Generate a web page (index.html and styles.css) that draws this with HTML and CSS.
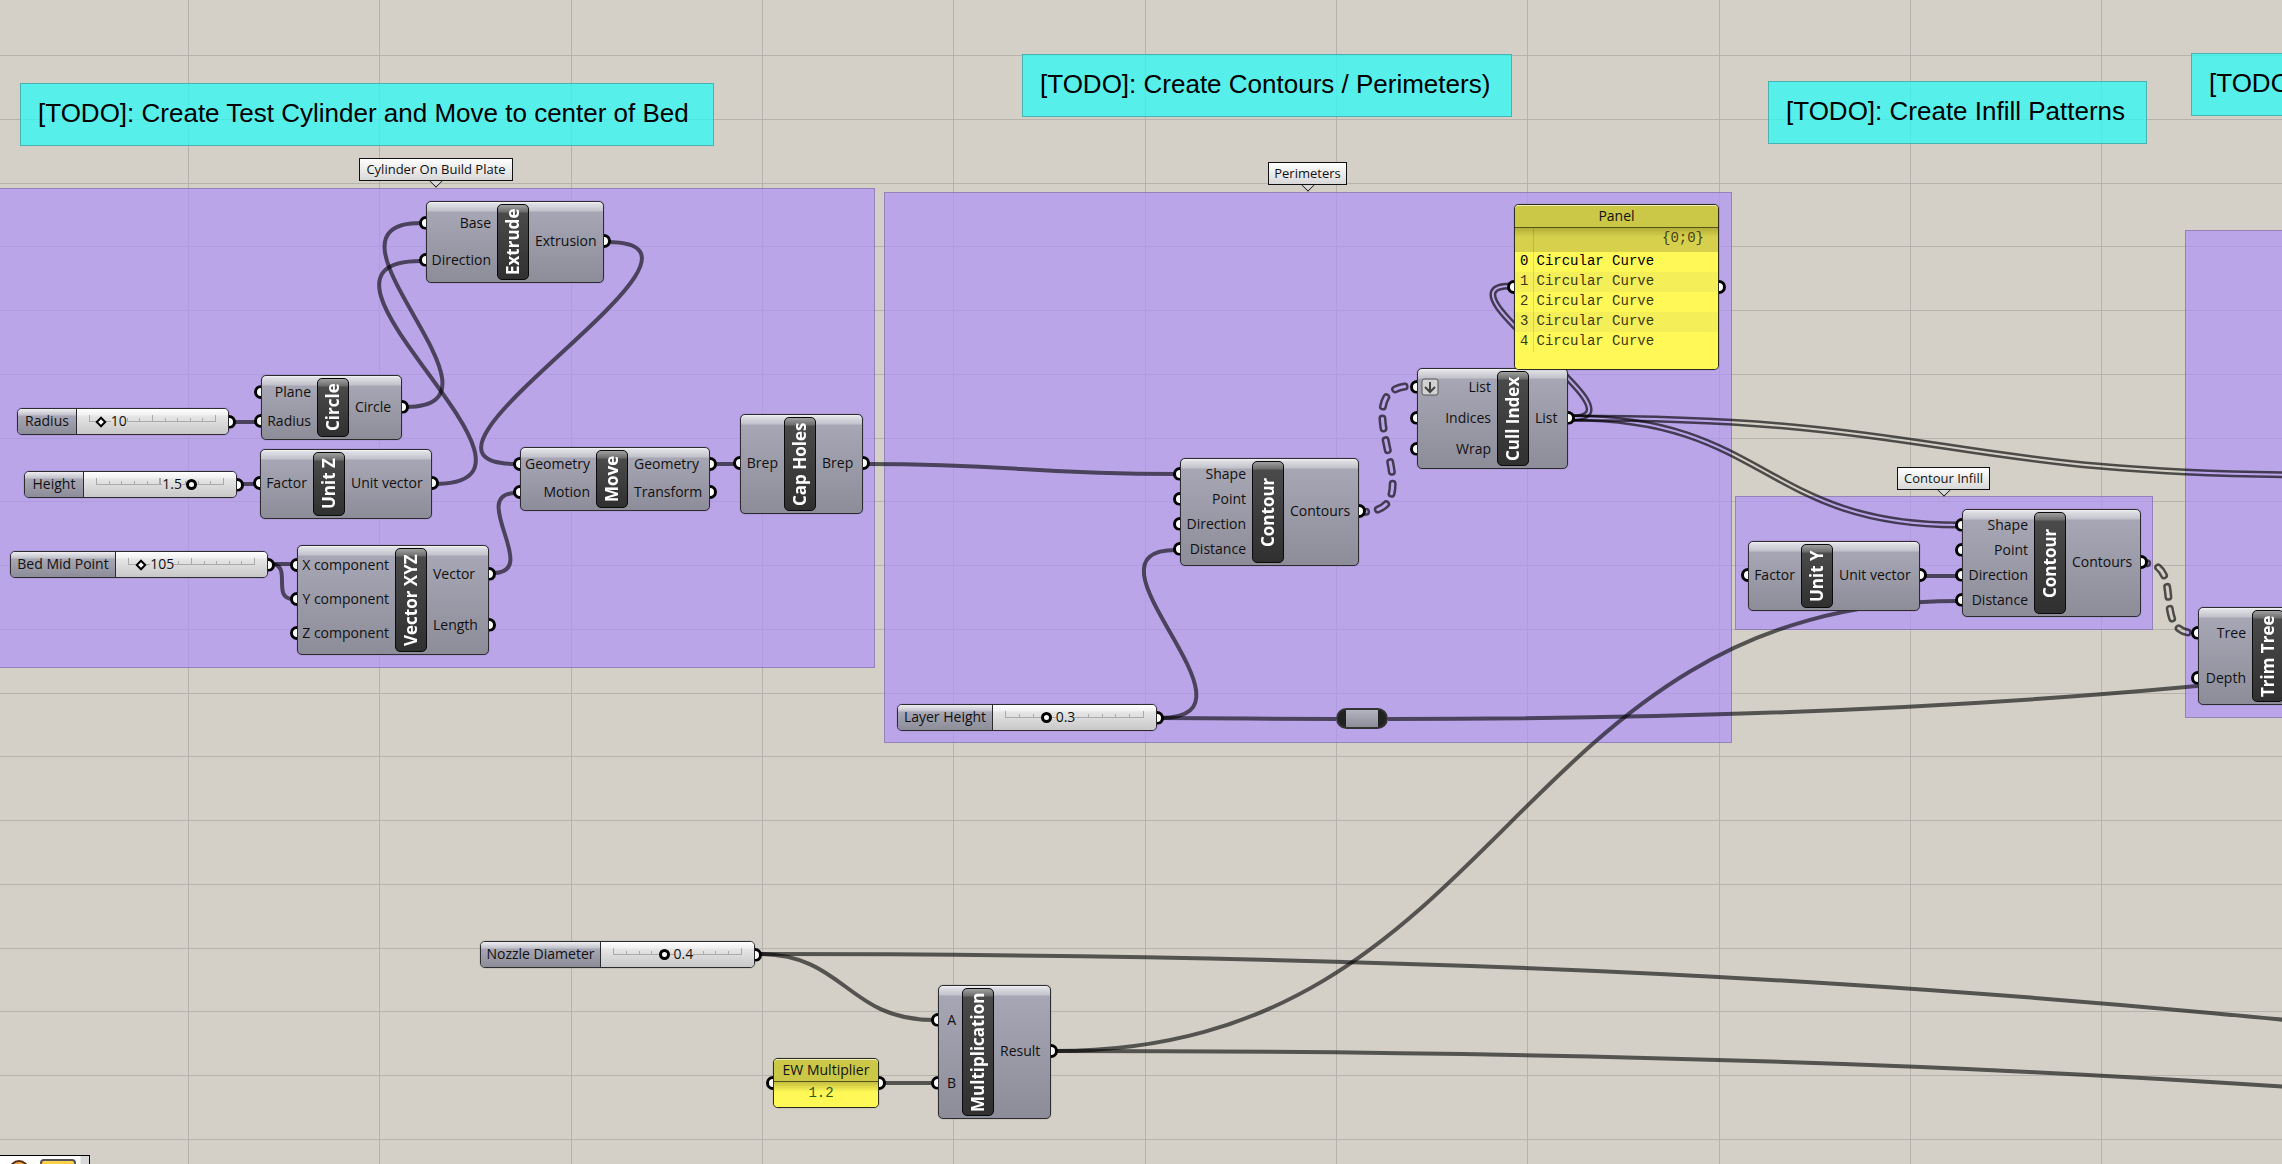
FILE: index.html
```html
<!DOCTYPE html>
<html lang="en">
<head>
<meta charset="utf-8">
<title>Slicer definition</title>
<link rel="stylesheet" href="styles.css">
</head>
<body>
<main class="canvas">
  <svg class="grid" aria-hidden="true">
    <defs>
      <pattern id="grid-lines" x="188" y="55" width="574" height="255" patternUnits="userSpaceOnUse">
        <path class="grid-line" d="M0 0h574v1h-574zM0 64h574v1h-574zM0 128h574v1h-574zM0 191h574v1h-574zM0 0h1v255h-1zM191 0h1v255h-1zM383 0h1v255h-1z"/>
      </pattern>
    </defs>
    <rect width="100%" height="100%" fill="url(#grid-lines)"/>
  </svg>

  <section class="group group-cylinder" aria-label="Cylinder On Build Plate"></section>
  <section class="group group-perimeters" aria-label="Perimeters"></section>
  <section class="group group-infill" aria-label="Contour Infill"></section>
  <section class="group group-trim" aria-label="Trim"></section>

  <h2 class="note note-cylinder">[TODO]: Create Test Cylinder and Move to center of Bed</h2>
  <h2 class="note note-contours">[TODO]: Create Contours / Perimeters)</h2>
  <h2 class="note note-infill">[TODO]: Create Infill Patterns</h2>
  <h2 class="note note-next">[TODO]:</h2>

  <div class="tag tag-cylinder">Cylinder On Build Plate</div>
  <div class="tag tag-perimeters">Perimeters</div>
  <div class="tag tag-infill">Contour Infill</div>

  <svg class="wires" aria-hidden="true">
    <defs>
      <path id="cull-far" d="M1572 418C1946 418 1946 475 2320 475"/>
      <path id="cull-contour" d="M1572 418C1765 418 1765 525 1958 525"/>
      <path id="cull-panel" d="M1572 418C1650 418 1432 286 1510 286"/>
      <path id="contour-cull" d="M1362 512C1440 512 1335 386 1413 386"/>
      <path id="contour-trim" d="M2143 563C2187 563 2150 633 2194 633"/>
      <mask id="m-far" class="list" maskUnits="userSpaceOnUse" x="0" y="0" width="100%" height="100%"><use class="outer" href="#cull-far"/><use class="inner" href="#cull-far"/></mask>
      <mask id="m-contour" class="list" maskUnits="userSpaceOnUse" x="0" y="0" width="100%" height="100%"><use class="outer" href="#cull-contour"/><use class="inner" href="#cull-contour"/></mask>
      <mask id="m-panel" class="list" maskUnits="userSpaceOnUse" x="0" y="0" width="100%" height="100%"><use class="outer" href="#cull-panel"/><use class="inner" href="#cull-panel"/></mask>
      <mask id="m-tree" class="tree" maskUnits="userSpaceOnUse" x="0" y="0" width="100%" height="100%"><use class="outer" href="#contour-cull"/><use class="inner" href="#contour-cull"/><use class="outer" href="#contour-trim"/><use class="inner" href="#contour-trim"/></mask>
    </defs>
    <path class="wire" d="M406 407C526 407 301 223 421 223"/>
    <path class="wire" d="M434 484C584 484 271 261 421 261"/>
    <path class="wire" d="M607 242C757 242 366 464 516 464"/>
    <path class="wire" d="M493 573C542 573 467 493 516 493"/>
    <path class="wire" d="M232 422H257"/>
    <path class="wire" d="M240 484H256"/>
    <path class="wire" d="M271 564H293"/>
    <path class="wire" d="M271 564C293 564 271 599 293 599"/>
    <path class="wire" d="M713 464H736"/>
    <path class="wire" d="M866 464C1021 464 1021 474 1176 474"/>
    <path class="wire" d="M1160 718C1276 718 1068 550 1176 550"/>
    <path class="wire" d="M1160 718C1248 718 1248 719 1336 719"/>
    <path class="wire" d="M1388 719C2588 719 2588 561 3788 561"/>
    <path class="wire" d="M758 954C846 954 846 1020 934 1020"/>
    <path class="wire" d="M758 954C2558 954 2558 1141 4358 1141"/>
    <path class="wire" d="M1055 1051C1507 1051 1507 601 1958 601"/>
    <path class="wire" d="M1055 1051C2705 1051 2705 1187 4355 1187"/>
    <path class="wire" d="M883 1083H934"/>
    <path class="wire" d="M1923 576H1958"/>
    <rect class="ink" width="100%" height="100%" mask="url(#m-far)"/>
    <rect class="ink" width="100%" height="100%" mask="url(#m-contour)"/>
    <rect class="ink" width="100%" height="100%" mask="url(#m-panel)"/>
    <rect class="ink" width="100%" height="100%" mask="url(#m-tree)"/>
  </svg>

  <article class="node extrude">
    <ul class="inputs"><li>Base</li><li>Direction</li></ul>
    <h3 class="core">Extrude</h3>
    <ul class="outputs"><li>Extrusion</li></ul>
  </article>
  <article class="node circle">
    <ul class="inputs"><li>Plane</li><li>Radius</li></ul>
    <h3 class="core">Circle</h3>
    <ul class="outputs"><li>Circle</li></ul>
  </article>
  <article class="node unit-z">
    <ul class="inputs"><li>Factor</li></ul>
    <h3 class="core">Unit Z</h3>
    <ul class="outputs"><li>Unit vector</li></ul>
  </article>
  <article class="node vector">
    <ul class="inputs"><li>X component</li><li>Y component</li><li>Z component</li></ul>
    <h3 class="core">Vector XYZ</h3>
    <ul class="outputs"><li>Vector</li><li>Length</li></ul>
  </article>
  <article class="node move">
    <ul class="inputs"><li>Geometry</li><li>Motion</li></ul>
    <h3 class="core">Move</h3>
    <ul class="outputs"><li>Geometry</li><li>Transform</li></ul>
  </article>
  <article class="node cap">
    <ul class="inputs"><li>Brep</li></ul>
    <h3 class="core">Cap Holes</h3>
    <ul class="outputs"><li>Brep</li></ul>
  </article>
  <article class="node contour">
    <ul class="inputs"><li>Shape</li><li>Point</li><li>Direction</li><li>Distance</li></ul>
    <h3 class="core">Contour</h3>
    <ul class="outputs"><li>Contours</li></ul>
  </article>
  <article class="node cull">
    <ul class="inputs">
      <li><svg class="flatten" viewBox="0 0 18 18" role="img" aria-label="Flatten"><rect x="1" y="1" width="16" height="16" rx="2"/><path d="M9 4V14M4 9L9 14L14 9"/></svg>List</li>
      <li>Indices</li><li>Wrap</li>
    </ul>
    <h3 class="core">Cull Index</h3>
    <ul class="outputs"><li>List</li></ul>
  </article>
  <article class="node unit-y">
    <ul class="inputs"><li>Factor</li></ul>
    <h3 class="core">Unit Y</h3>
    <ul class="outputs"><li>Unit vector</li></ul>
  </article>
  <article class="node contour contour-infill">
    <ul class="inputs"><li>Shape</li><li>Point</li><li>Direction</li><li>Distance</li></ul>
    <h3 class="core">Contour</h3>
    <ul class="outputs"><li>Contours</li></ul>
  </article>
  <article class="node trim">
    <ul class="inputs"><li>Tree</li><li>Depth</li></ul>
    <h3 class="core">Trim Tree</h3>
    <ul class="outputs"></ul>
  </article>
  <article class="node multiplication">
    <ul class="inputs"><li>A</li><li>B</li></ul>
    <h3 class="core">Multiplication</h3>
    <ul class="outputs"><li>Result</li></ul>
  </article>

  <div class="slider slider-radius">
    <label for="radius">Radius</label>
    <div class="track whole" style="--value:.1"><span class="scale"></span><output for="radius">10</output><input id="radius" type="range" min="0" max="100" value="10"></div>
  </div>
  <div class="slider slider-height">
    <label for="height">Height</label>
    <div class="track flip" style="--value:.75"><span class="scale"></span><output for="height">1.5</output><input id="height" type="range" min="0" max="2" step="0.1" value="1.5"></div>
  </div>
  <div class="slider slider-bed">
    <label for="bed">Bed Mid Point</label>
    <div class="track whole" style="--value:.105"><span class="scale"></span><output for="bed">105</output><input id="bed" type="range" min="0" max="1000" value="105"></div>
  </div>
  <div class="slider slider-layer">
    <label for="layer">Layer Height</label>
    <div class="track" style="--value:.3"><span class="scale"></span><output for="layer">0.3</output><input id="layer" type="range" min="0" max="1" step="0.1" value="0.3"></div>
  </div>
  <div class="slider slider-nozzle">
    <label for="nozzle">Nozzle Diameter</label>
    <div class="track" style="--value:.4"><span class="scale"></span><output for="nozzle">0.4</output><input id="nozzle" type="range" min="0" max="1" step="0.1" value="0.4"></div>
  </div>

  <div class="relay"></div>

  <section class="panel panel-curves">
    <h3>Panel</h3>
    <div class="panel-body">
      <table>
        <thead><tr><td></td><th scope="col">{0;0}</th></tr></thead>
        <tbody>
          <tr><th scope="row">0</th><td>Circular Curve</td></tr>
          <tr><th scope="row">1</th><td>Circular Curve</td></tr>
          <tr><th scope="row">2</th><td>Circular Curve</td></tr>
          <tr><th scope="row">3</th><td>Circular Curve</td></tr>
          <tr><th scope="row">4</th><td>Circular Curve</td></tr>
        </tbody>
      </table>
    </div>
  </section>
  <section class="panel panel-multiplier">
    <h3>EW Multiplier</h3>
    <div class="panel-body"><p>1.2</p></div>
  </section>

  <div class="toolbar" role="toolbar" aria-label="Canvas tools">
    <button type="button" aria-label="Preview"><svg viewBox="0 0 26 26"><circle cx="13" cy="11" r="9" fill="#f2a93b" stroke="#5a2f1a" stroke-width="2"/></svg></button>
    <button type="button" class="swatch" aria-label="Sketch"></button>
  </div>
</main>
</body>
</html>
```
FILE: styles.css
```css
*, ::before, ::after { box-sizing: border-box; }

body {
  margin: 0;
  font: 14px/18px "Open Sans", "Noto Sans", sans-serif;
  color: #111;
}

h2, h3, ul, p { margin: 0; padding: 0; }
ul { list-style: none; }

.canvas {
  position: relative;
  min-height: 100vh;
  overflow: hidden;
  background: #d4d0c8;
}

.grid, .wires {
  position: absolute;
  inset: 0;
  width: 100%;
  height: 100%;
}
.grid-line { fill: #000; fill-opacity: .14; }

/* groups */
.group {
  position: absolute;
  background: rgba(176, 147, 246, .7);
  border: 1px solid rgba(60, 50, 80, .3);
}
.group-cylinder { left: -10px; top: 188px; width: 885px; height: 480px; }
.group-perimeters { left: 884px; top: 192px; width: 848px; height: 551px; }
.group-infill { left: 1735px; top: 496px; width: 418px; height: 134px; }
.group-trim { left: 2185px; top: 230px; width: 400px; height: 488px; }

/* scribble notes */
.note {
  position: absolute;
  height: 63px;
  padding: 0 17px;
  background: rgba(47, 248, 244, .76);
  border: 1px solid rgba(60, 120, 120, .5);
  font: 26px/58px "Liberation Sans", Arial, sans-serif;
  color: #000;
  white-space: nowrap;
}
.note-cylinder { left: 20px; top: 83px; width: 694px; }
.note-contours { left: 1022px; top: 54px; width: 490px; }
.note-infill { left: 1768px; top: 81px; width: 379px; }
.note-next { left: 2191px; top: 53px; width: 400px; }

/* group name tags */
.tag {
  position: absolute;
  height: 23px;
  border: 1px solid #111;
  background: linear-gradient(#fff, #d8d8d8);
  font-size: 13px;
  line-height: 21px;
  text-align: center;
  white-space: nowrap;
}
.tag::after {
  content: "";
  position: absolute;
  left: 50%;
  bottom: -6px;
  width: 10px;
  height: 10px;
  margin-left: -5px;
  border: solid #111;
  border-width: 0 1px 1px 0;
  background: #d8d8d8;
  transform: rotate(45deg);
  clip-path: polygon(100% 0, 100% 100%, 0 100%);
}
.tag-cylinder { left: 359px; top: 158px; width: 154px; }
.tag-perimeters { left: 1268px; top: 162px; width: 79px; }
.tag-infill { left: 1897px; top: 467px; width: 93px; }

/* wires */
.wire { fill: none; stroke: #000; stroke-opacity: .6; stroke-width: 4; }
.ink { fill: #000; fill-opacity: .64; }
mask use { fill: none; }
.list .outer { stroke: #fff; stroke-width: 7; }
.list .inner { stroke: #000; stroke-width: 2; }
.tree use { stroke-linecap: round; stroke-dasharray: 10 12; stroke-dashoffset: 6; }
.tree .outer { stroke: #fff; stroke-width: 8; }
.tree .inner { stroke: #000; stroke-width: 3; }

/* components */
.node {
  position: absolute;
  display: flex;
  padding: 2px 0;
  border: 1px solid #2c2c30;
  border-radius: 5px;
  background: linear-gradient(#f4f4f6 0, #dedee4 2px, #c2c2cb 9px, #a7a6b4 10px, #8d8c99 100%);
  box-shadow: 0 0 1px rgba(0, 0, 0, .6);
}
.inputs, .outputs {
  display: flex;
  flex-direction: column;
  min-width: 0;
  padding-bottom: 2px;
}
.inputs { flex: 0 0 var(--in); }
.outputs { flex: 1; }
.inputs li, .outputs li {
  position: relative;
  flex: 1;
  display: flex;
  align-items: center;
  white-space: nowrap;
}
.inputs li { justify-content: flex-end; padding-right: 6px; }
.outputs li { padding-left: 6px; }

/* connection grips: the outer half of a ring */
.inputs li::before, .outputs li::after, .slider::after, .panel::before, .panel::after {
  content: "";
  position: absolute;
  top: 50%;
  width: 14px;
  height: 14px;
  margin-top: -7px;
  border: 3px solid #000;
  border-radius: 50%;
  background: #fff;
}
.inputs li::before, .panel::before {
  left: -8px;
  clip-path: inset(0 7px 0 0);
}
.outputs li::after, .slider::after, .panel::after {
  right: -8px;
  clip-path: inset(0 0 0 7px);
}

.core {
  flex: 0 0 32px;
  display: flex;
  align-items: center;
  justify-content: center;
  border: 1px solid #0a0a0a;
  border-radius: 5px;
  background: linear-gradient(to top, #a0a0a0 0, #6c6c6c 7px, #4a4a4a 8px, #303030 100%);
  font-size: 17px;
  line-height: 30px;
  color: #fff;
  white-space: nowrap;
  writing-mode: vertical-rl;
  transform: rotate(180deg);
}

.flatten {
  position: absolute;
  left: 3px;
  width: 18px;
  height: 18px;
}
.flatten rect { fill: #d2d2d2; stroke: #555; stroke-width: 1; }
.flatten path { fill: none; stroke: #444; stroke-width: 2; }

.extrude { left: 426px; top: 201px; width: 178px; height: 82px; --in: 70px; }
.circle { left: 261px; top: 375px; width: 141px; height: 65px; --in: 55px; }
.unit-z { left: 260px; top: 449px; width: 172px; height: 70px; --in: 52px; }
.vector { left: 297px; top: 545px; width: 192px; height: 110px; --in: 97px; }
.move { left: 520px; top: 447px; width: 190px; height: 64px; --in: 75px; }
.cap { left: 740px; top: 414px; width: 123px; height: 100px; --in: 43px; }
.contour { left: 1180px; top: 458px; width: 179px; height: 108px; --in: 71px; }
.cull { left: 1417px; top: 368px; width: 151px; height: 101px; --in: 79px; }
.unit-y { left: 1748px; top: 541px; width: 172px; height: 70px; --in: 52px; }
.contour-infill { left: 1962px; top: 509px; }
.trim { left: 2198px; top: 607px; width: 178px; height: 98px; --in: 53px; }
.multiplication { left: 938px; top: 985px; width: 113px; height: 134px; --in: 23px; }

/* number sliders */
.slider {
  position: absolute;
  display: flex;
  height: 27px;
  border: 1px solid #2c2c30;
  border-radius: 5px;
  box-shadow: 0 0 1px rgba(0, 0, 0, .6);
}
.slider label {
  flex: 0 0 var(--name);
  border-right: 1px solid #2c2c30;
  border-radius: 4px 0 0 4px;
  background: linear-gradient(#eeeef2 0, #c2c2cb 6px, #a7a6b4 7px, #8d8c99 100%);
  line-height: 24px;
  text-align: center;
  white-space: nowrap;
}
.track {
  position: relative;
  flex: 1;
  display: flex;
  padding: 0 7px;
  border-radius: 0 4px 4px 0;
  background: linear-gradient(#fff 0, #f0f0f0 6px, #e6e6e6 7px, #c8c8c8 100%);
}
.track input {
  position: relative;
  flex: 1;
  min-width: 0;
  margin: 0;
  appearance: none;
  background: none;
}
.track input::-webkit-slider-thumb {
  appearance: none;
  width: 11px;
  height: 11px;
  border: 3px solid #000;
  border-radius: 50%;
  background: #fff;
}
.whole input::-webkit-slider-thumb {
  width: 8px;
  height: 8px;
  border-width: 2px;
  border-radius: 0;
  transform: rotate(45deg);
}
.scale {
  position: absolute;
  left: 12px;
  right: 12px;
  top: 6px;
  height: 7px;
  border-right: 1px solid #aaa;
  background:
    linear-gradient(#aaa, #aaa) bottom / 100% 1px no-repeat,
    repeating-linear-gradient(to right, #aaa 0 1px, transparent 1px 10%) bottom / 100% 4px no-repeat,
    repeating-linear-gradient(to right, #aaa 0 1px, transparent 1px 50%) bottom / 100% 7px no-repeat;
}
.track output {
  position: absolute;
  top: 0;
  bottom: 0;
  left: calc(12px + (100% - 24px) * var(--value) + 9px);
  background: inherit;
  border-radius: 0;
  line-height: 24px;
}
.flip output { left: auto; right: calc(12px + (100% - 24px) * (1 - var(--value)) + 10px); }

.slider-radius { left: 17px; top: 408px; width: 212px; --name: 59px; }
.slider-height { left: 24px; top: 471px; width: 213px; --name: 59px; }
.slider-bed { left: 10px; top: 551px; width: 258px; --name: 105px; }
.slider-layer { left: 897px; top: 704px; width: 260px; --name: 95px; }
.slider-nozzle { left: 480px; top: 941px; width: 275px; --name: 120px; }

.relay {
  position: absolute;
  left: 1336px;
  top: 708px;
  width: 52px;
  height: 21px;
  border: 2px solid #333;
  border-radius: 11px;
  background: linear-gradient(to right, #222 8px, transparent 8px 40px, #222 40px), linear-gradient(#b4b3c0, #8d8c99);
}

/* yellow panels */
.panel {
  position: absolute;
  display: flex;
  flex-direction: column;
  border: 1px solid #2c2c20;
  border-radius: 5px;
  background: #fff857;
  box-shadow: 0 0 1px rgba(0, 0, 0, .6);
}
.panel h3 {
  height: 23px;
  border-top: 1px solid #f0efb8;
  border-bottom: 1px solid #55521c;
  border-radius: 4px 4px 0 0;
  background: #cbc747;
  font-size: 14px;
  font-weight: 400;
  line-height: 20px;
  text-align: center;
}
.panel-body {
  flex: 1;
  border-radius: 0 0 4px 4px;
  background: linear-gradient(#c4be40, #fff857 10px);
  font-family: "Liberation Mono", "Courier New", monospace;
}
.panel-curves { left: 1514px; top: 204px; width: 205px; height: 166px; }
.panel-multiplier { left: 773px; top: 1058px; width: 106px; height: 50px; }
.panel-multiplier p {
  padding-right: 10px;
  line-height: 22px;
  color: #2c5a16;
  text-align: center;
}
.panel table { width: 100%; border-collapse: collapse; }
.panel td, .panel th {
  padding: 0 3px 2px;
  font-weight: 400;
  line-height: 16px;
  text-align: left;
}
.panel th[scope="row"], .panel thead td {
  width: 18px;
  padding: 0 0 2px 5px;
  border-right: 1px solid rgba(0, 0, 0, .12);
}
.panel thead tr { height: 24px; background: linear-gradient(#b4ae38, #d6d04c 9px); }
.panel thead th { padding: 0 14px 4px 0; text-align: right; color: #444018; }
.panel tbody tr { height: 20px; background: #fff857; color: #3c3a12; }
.panel tbody tr:nth-child(even) { background: #f4ee58; }
.panel tbody tr:first-child { color: #000; }

.toolbar {
  position: absolute;
  left: 0;
  bottom: -35px;
  display: flex;
  gap: 8px;
  width: 90px;
  height: 44px;
  padding: 3px 6px;
  border: solid #000;
  border-width: 1px 1px 0 0;
  background: linear-gradient(to right, #fff 80px, #d8d8d8 81px);
}
.toolbar button {
  display: flex;
  align-items: flex-start;
  width: 26px;
  height: 36px;
  padding: 0;
  border: 0;
  background: none;
}
.toolbar svg { width: 26px; height: 26px; }
.toolbar .swatch {
  width: 36px;
  border: 2px solid #555;
  border-radius: 4px;
  background: linear-gradient(#ffd75a, #ffb900 8px);
}
```
